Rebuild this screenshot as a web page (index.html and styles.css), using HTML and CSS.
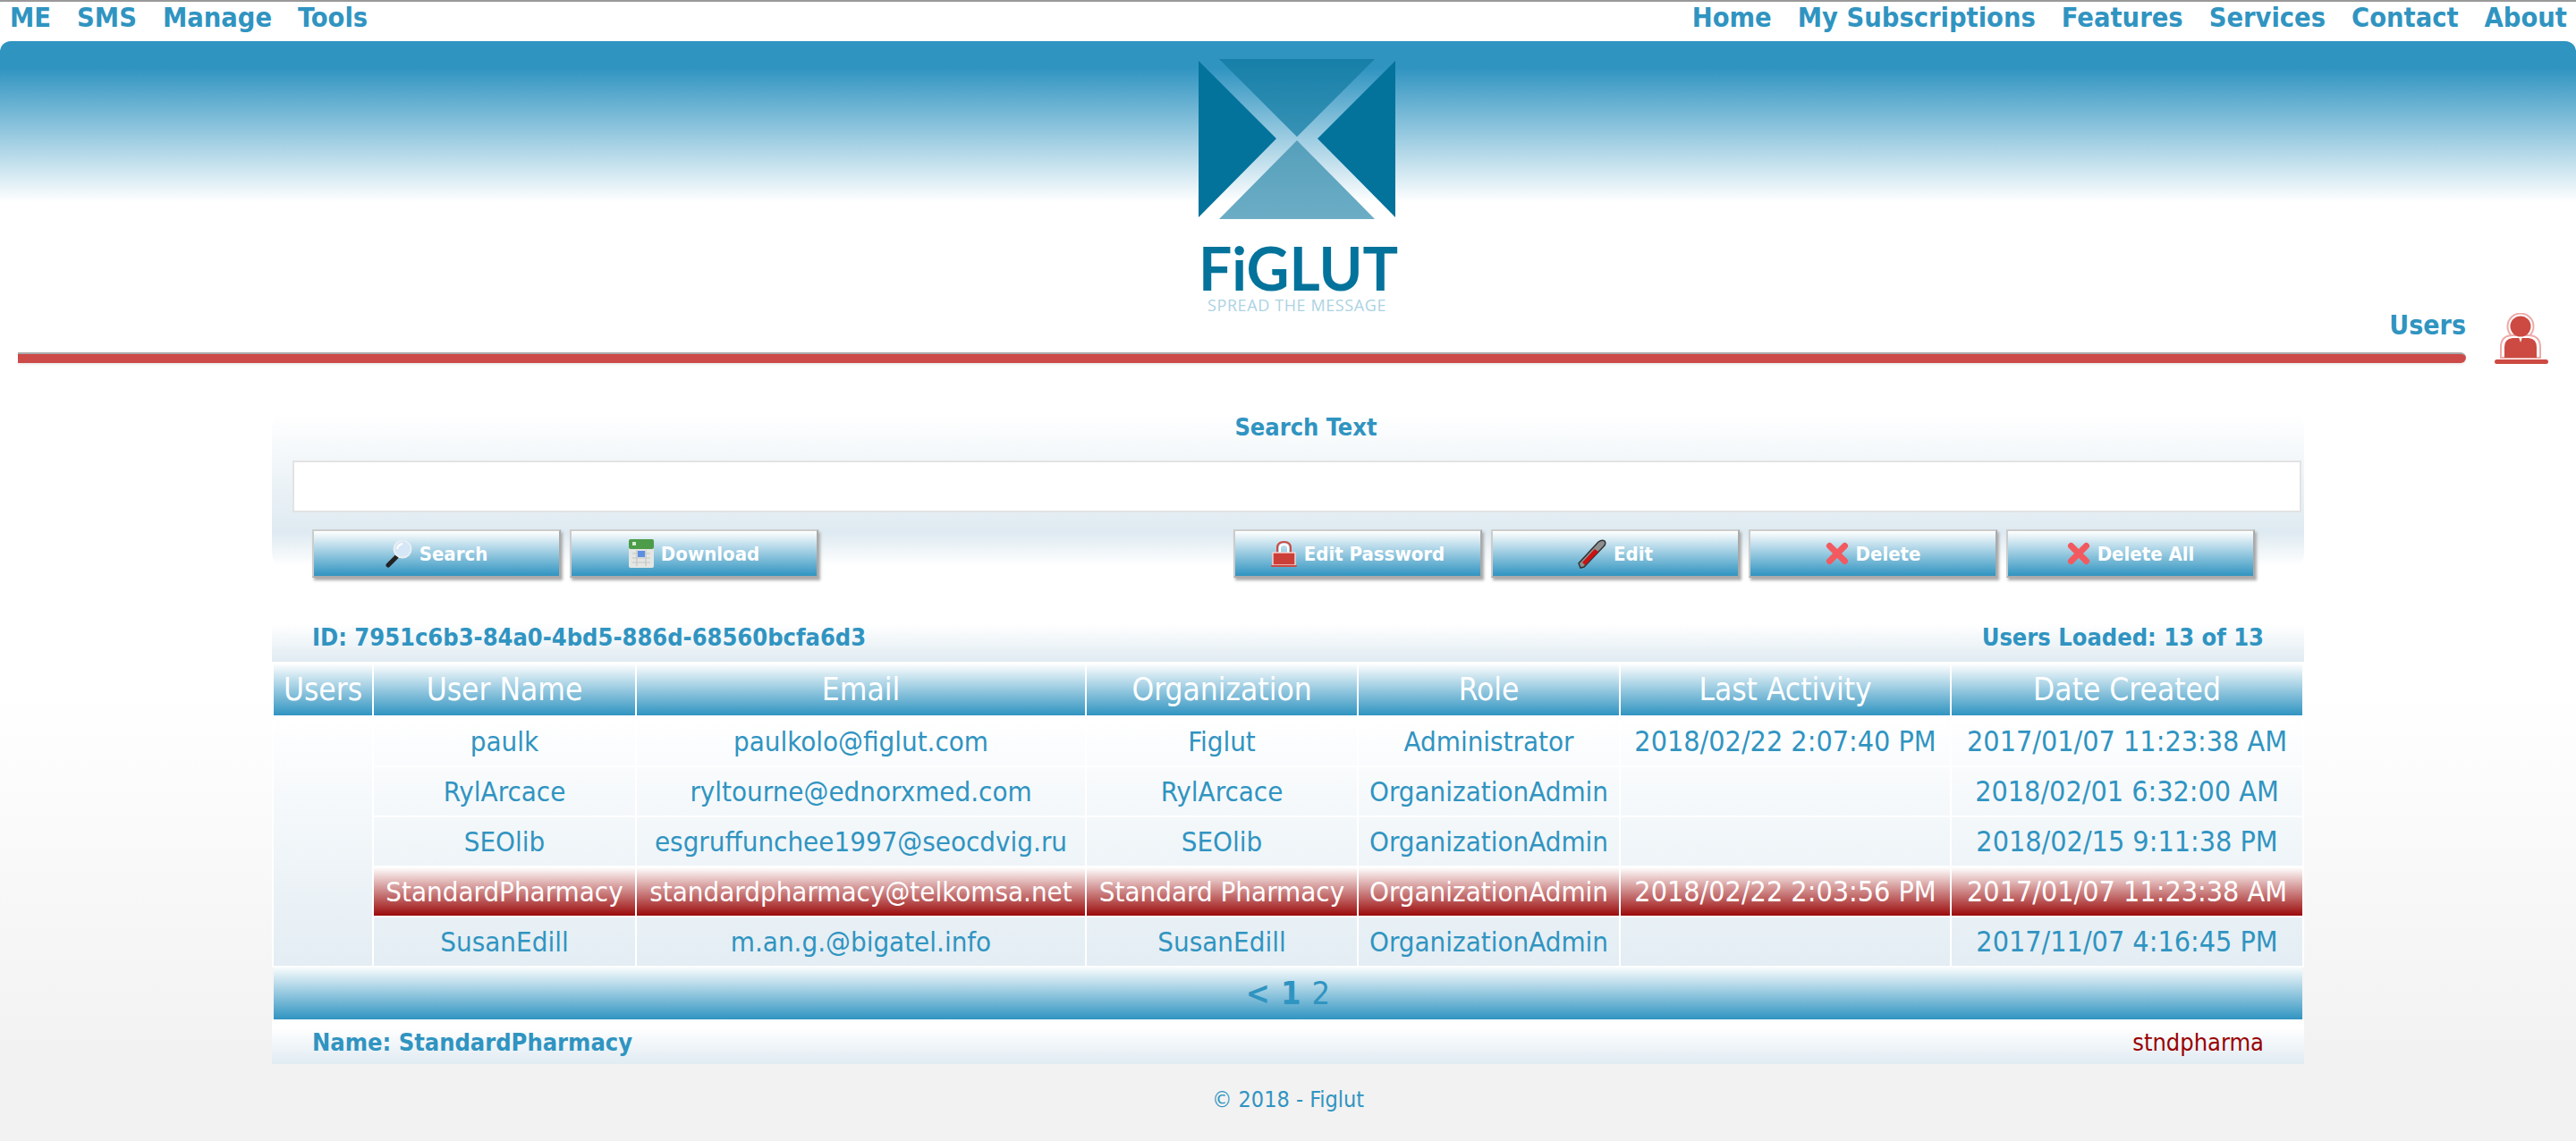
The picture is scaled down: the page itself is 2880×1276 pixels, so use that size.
FILE: index.html
```html
<!DOCTYPE html>
<html lang="en">
<head>
  <meta charset="UTF-8">
  <meta name="viewport" content="width=device-width, initial-scale=1.0">
  <title>Figlut - Users</title>
  <link rel="stylesheet" href="styles.css">
</head>
<body>

  <!-- Top menu -->
  <nav class="topnav">
    <div class="topnav-group">
      <a href="#">ME</a>
      <a href="#">SMS</a>
      <a href="#">Manage</a>
      <a href="#">Tools</a>
    </div>
    <div class="topnav-group">
      <a href="#">Home</a>
      <a href="#">My Subscriptions</a>
      <a href="#">Features</a>
      <a href="#">Services</a>
      <a href="#">Contact</a>
      <a href="#">About</a>
    </div>
  </nav>

  <!-- Banner with logo -->
  <header class="banner">
    <div class="logo">
      <svg class="logo-mark" viewBox="0 0 220 179" width="220" height="179">
        <defs>
          <linearGradient id="logo-top" x1="0" y1="0" x2="0" y2="1">
            <stop offset="0" stop-color="#167fa8"/>
            <stop offset="1" stop-color="#3892b5"/>
          </linearGradient>
          <linearGradient id="logo-bottom" x1="0" y1="0" x2="0" y2="1">
            <stop offset="0" stop-color="#559fbb"/>
            <stop offset="1" stop-color="#6cadc5"/>
          </linearGradient>
        </defs>
        <path d="M0 2 L87 89 L0 177 Z" fill="#03739b"/>
        <path d="M220 2 L133 89 L220 177 Z" fill="#03739b"/>
        <path d="M23 0 L197 0 L110 87 Z" fill="url(#logo-top)"/>
        <path d="M110 91 L197 179 L23 179 Z" fill="url(#logo-bottom)"/>
      </svg>
      <div class="logo-name">FiGLUT</div>
      <div class="logo-tag">SPREAD THE MESSAGE</div>
    </div>
    <div class="page-title">
      <div class="page-title-main">
        <div class="page-title-text">Users</div>
        <div class="page-rule"></div>
      </div>
      <svg class="page-icon" viewBox="0 0 62 58" width="62" height="58">
        <circle cx="30" cy="15" r="14.5" fill="#fff" stroke="#eeaaa8" stroke-width="2"/>
        <path d="M8 50 V38 Q8 26 20 25 H40 Q52 26 52 38 V50 Z" fill="#fff" stroke="#eeaaa8" stroke-width="2"/>
        <circle cx="30" cy="15" r="11.5" fill="#cc4a42"/>
        <path d="M12 50 V38 Q12 29 21 28 H39 Q48 29 48 38 V50 Z" fill="#cc4a42"/>
        <path d="M28 27 H32 L30 33 Z" fill="#fff"/>
        <rect x="1" y="52" width="60" height="5" rx="2.5" fill="#cc4a42"/>
      </svg>
    </div>
  </header>

  <main class="content">

    <!-- Search form -->
    <section class="search-panel">
      <div class="search-label">Search Text</div>
      <input class="search-input" type="text">
      <div class="button-row">
        <div class="button-group">
          <button class="btn" type="button">
            <svg viewBox="0 0 30 32" width="30" height="32">
              <path d="M12 20 L3 29" stroke="#222" stroke-width="5" stroke-linecap="round"/>
              <circle cx="19" cy="11" r="9.5" fill="#d5e7f6" stroke="#e8eef3" stroke-width="2"/>
              <path d="M13 11 Q14 6 19 5" fill="none" stroke="#fff" stroke-width="2"/>
            </svg>
            Search
          </button>
          <button class="btn" type="button">
            <svg viewBox="0 0 28 32" width="28" height="32">
              <rect x="0" y="0" width="28" height="32" rx="2" fill="#e4e6e4"/>
              <rect x="0" y="0" width="28" height="11" rx="2" fill="#4c9c4a"/>
              <path d="M4 16 H24 M4 21 H24 M4 26 H24 M9 12 V30 M19 12 V30" stroke="#c4c6c4" stroke-width="1.2"/>
              <rect x="10" y="13" width="8" height="7" fill="#5b8fe0"/>
              <rect x="4" y="3" width="4" height="4" fill="#d6ecd0"/>
            </svg>
            Download
          </button>
        </div>
        <div class="button-group">
          <button class="btn" type="button">
            <svg viewBox="0 0 29 29" width="29" height="29">
              <path d="M7 14 V8 Q7 1 14.500 1 Q22 1 22 8 V14" fill="none" stroke="#cc4a42" stroke-width="2"/>
              <path d="M10 14 V8 Q10 4 14.500 4 Q19 4 19 8 V14" fill="none" stroke="#fff" stroke-width="2"/>
              <rect x="2" y="13" width="25" height="14" fill="#cc3f38" stroke="#f4d4d2" stroke-width="1.500"/>
              <rect x="0" y="27" width="29" height="2" rx="1" fill="#cc4a42"/>
            </svg>
            Edit Password
          </button>
          <button class="btn" type="button">
            <svg viewBox="0 0 32 33" width="32" height="33">
              <path d="M3 32 L1 27 L23 3 Q27 0 30 2 Q32 5 29 8 L7 31 Z" fill="#8e8e8e" stroke="#333" stroke-width="1.500"/>
              <path d="M5 26 L19 11 L23 14 L8 29 Z" fill="#cc1111"/>
            </svg>
            Edit
          </button>
          <button class="btn" type="button">
            <svg viewBox="0 0 26 26" width="26" height="26">
              <path d="M4.500 4.500 L21.500 21.500 M21.500 4.500 L4.500 21.500" stroke="#f25a5f" stroke-width="7" stroke-linecap="round"/>
            </svg>
            Delete
          </button>
          <button class="btn" type="button">
            <svg viewBox="0 0 26 26" width="26" height="26">
              <path d="M4.500 4.500 L21.500 21.500 M21.500 4.500 L4.500 21.500" stroke="#f25a5f" stroke-width="7" stroke-linecap="round"/>
            </svg>
            Delete All
          </button>
        </div>
      </div>
    </section>

    <!-- Id and count -->
    <section class="info-row">
      <span class="info-bold">ID: 7951c6b3-84a0-4bd5-886d-68560bcfa6d3</span>
      <span class="info-bold">Users Loaded: 13 of 13</span>
    </section>

    <!-- Users grid -->
    <table class="users-table">
      <colgroup>
        <col class="col-users">
        <col class="col-name">
        <col class="col-email">
        <col class="col-org">
        <col class="col-role">
        <col class="col-activity">
        <col class="col-created">
      </colgroup>
      <thead>
        <tr>
          <th>Users</th>
          <th>User Name</th>
          <th>Email</th>
          <th>Organization</th>
          <th>Role</th>
          <th>Last Activity</th>
          <th>Date Created</th>
        </tr>
      </thead>
      <tbody>
        <tr>
          <td rowspan="5"></td>
          <td>paulk</td>
          <td>paulkolo@figlut.com</td>
          <td>Figlut</td>
          <td>Administrator</td>
          <td class="cell-date">2018/02/22 2:07:40 PM</td>
          <td class="cell-date">2017/01/07 11:23:38 AM</td>
        </tr>
        <tr>
          <td>RylArcace</td>
          <td>ryltourne@ednorxmed.com</td>
          <td>RylArcace</td>
          <td>OrganizationAdmin</td>
          <td></td>
          <td class="cell-date">2018/02/01 6:32:00 AM</td>
        </tr>
        <tr>
          <td>SEOlib</td>
          <td>esgruffunchee1997@seocdvig.ru</td>
          <td>SEOlib</td>
          <td>OrganizationAdmin</td>
          <td></td>
          <td class="cell-date">2018/02/15 9:11:38 PM</td>
        </tr>
        <tr class="selected">
          <td>StandardPharmacy</td>
          <td>standardpharmacy@telkomsa.net</td>
          <td>Standard Pharmacy</td>
          <td>OrganizationAdmin</td>
          <td class="cell-date">2018/02/22 2:03:56 PM</td>
          <td class="cell-date">2017/01/07 11:23:38 AM</td>
        </tr>
        <tr>
          <td>SusanEdill</td>
          <td>m.an.g.@bigatel.info</td>
          <td>SusanEdill</td>
          <td>OrganizationAdmin</td>
          <td></td>
          <td class="cell-date">2017/11/07 4:16:45 PM</td>
        </tr>
      </tbody>
    </table>

    <div class="pager">
      <a class="pager-current" href="#">&lt;</a>
      <a class="pager-current" href="#">1</a>
      <a href="#">2</a>
    </div>

    <section class="name-row">
      <span class="info-bold">Name: StandardPharmacy</span>
      <span class="login-name">stndpharma</span>
    </section>
  </main>

  <footer class="page-footer">© 2018 - Figlut</footer>

</body>
</html>
```

FILE: styles.css
```css
/* General page */
html, body {
  margin: 0;
  padding: 0;
}

body {
  height: 1276px;
  overflow: hidden;
  box-sizing: border-box;
  border-top: 2px solid #999;
  background: linear-gradient(#fff 60%, #f2f2f2 92%);
  color: #3094c1;
  font-family: "DejaVu Sans", Verdana, sans-serif;
  font-stretch: condensed;
}

a {
  color: inherit;
  text-decoration: none;
}

/* Top menu */
.topnav {
  display: flex;
  justify-content: space-between;
  height: 44px;
  padding: 0 10px 0 11px;
  font-size: 30.5px;
  font-weight: bold;
  line-height: 36px;
}

.topnav-group {
  display: flex;
  gap: 29px;
}

/* Banner */
.banner {
  height: 417px;
  box-sizing: border-box;
  padding-top: 20px;
  border-radius: 12px 12px 0 0;
  background: linear-gradient(#3094c1 30px, #fff 180px) no-repeat;
  background-size: 100% 180px;
}

.logo {
  width: 220px;
  height: 280px;
  margin: 0 auto;
  padding-left: 20px;
  text-align: center;
}

.logo-mark {
  display: block;
}

.logo-name {
  margin-top: 20px;
  font-family: Lato, sans-serif;
  font-size: 66px;
  font-weight: bold;
  line-height: 70px;
  color: #03739b;
}

.logo-tag {
  margin-top: -3px;
  font-family: "Open Sans", sans-serif;
  font-size: 18px;
  font-stretch: normal;
  letter-spacing: 0.6px;
  line-height: 18px;
  white-space: nowrap;
  color: #acd3e3;
}

.page-title {
  display: flex;
  align-items: flex-end;
  gap: 31px;
  padding: 0 30px 0 20px;
}

.page-title-main {
  flex: 1;
}

.page-title-text {
  font-size: 30px;
  font-weight: bold;
  line-height: 36px;
  text-align: right;
}

.page-rule {
  height: 10px;
  margin: 12px 0 2px;
  border-top: 2px solid #aaa;
  border-radius: 0 6px 6px 0;
  background: #cc4a48;
  box-shadow: 0 2px 2px #eee;
}

/* Main panel */
.content {
  width: 2272px;
  margin-left: 304px;
}

.search-panel {
  height: 170px;
  box-sizing: border-box;
  padding: 0 3px 0 23px;
  border-radius: 14px;
  background: linear-gradient(#fff 0, #deeaf1 78%, #fff 100%);
}

.search-label {
  height: 52px;
  padding-left: 20px;
  font-size: 27px;
  font-weight: bold;
  line-height: 30px;
  text-align: center;
}

.search-input {
  display: block;
  width: 100%;
  height: 58px;
  box-sizing: border-box;
  border: 2px solid #e3e3e3;
  background: #fff;
}

.button-row {
  display: flex;
  justify-content: space-between;
  margin-top: 19px;
  padding: 0 52px 0 22px;
}

.button-group {
  display: flex;
  gap: 10px;
}

.btn {
  display: flex;
  align-items: center;
  justify-content: center;
  gap: 8px;
  width: 278px;
  height: 54px;
  padding: 0;
  border: 2px solid #ccc;
  border-right-color: #aaa;
  border-bottom-color: #aaa;
  background: linear-gradient(#fff, #3094c1);
  box-shadow: 2px 3px 3px #aaa;
  color: #fff;
  font-family: inherit;
  font-size: 22px;
  font-weight: bold;
  font-stretch: condensed;
}

/* Id row */
.info-row {
  display: flex;
  justify-content: space-between;
  align-items: center;
  height: 60px;
  box-sizing: border-box;
  margin-top: 47px;
  padding: 4px 45px 0;
  background: linear-gradient(#fff 30%, #e0ebf2);
}

.info-bold {
  font-size: 27px;
  font-weight: bold;
}

/* Users grid */
.users-table {
  width: 2272px;
  border-collapse: separate;
  border-spacing: 2px;
  table-layout: fixed;
  background: #fff;
}

.users-table th, .users-table td {
  padding: 0;
  text-align: center;
  white-space: nowrap;
}

.col-users { width: 110px; }
.col-name { width: 292px; }
.col-email { width: 501px; }
.col-org { width: 302px; }
.col-role { width: 291px; }
.col-activity { width: 368px; }
.col-created { width: 392px; }

.users-table th {
  height: 58px;
  background: linear-gradient(#fff, #3094c1);
  color: #fff;
  font-size: 35px;
  font-weight: normal;
}

/* one gradient through all rows, pinned to the window */
.users-table td {
  height: 54px;
  background: linear-gradient(#fff 800px, #e3edf3 1080px) fixed;
  font-size: 31px;
}

.users-table .cell-date {
  font-size: 32px;
}

.users-table .selected td {
  background: linear-gradient(#fff, #9b0a0a);
  color: #fff;
}

/* Pagination */
.pager {
  display: flex;
  justify-content: center;
  align-items: center;
  gap: 12px;
  height: 60px;
  margin: -2px 2px 0;
  background: linear-gradient(#fff, #3094c1);
  font-size: 36px;
}

.pager-current {
  font-weight: bold;
}

/* Selected user's name */
.name-row {
  display: flex;
  justify-content: space-between;
  align-items: center;
  height: 50px;
  padding: 0 45px;
  background: linear-gradient(#fff 20%, #e0ebf2);
}

.login-name {
  color: #990000;
  font-size: 27px;
}

/* Footer */
.page-footer {
  margin-top: 26px;
  font-size: 25px;
  line-height: 28px;
  text-align: center;
}
```
